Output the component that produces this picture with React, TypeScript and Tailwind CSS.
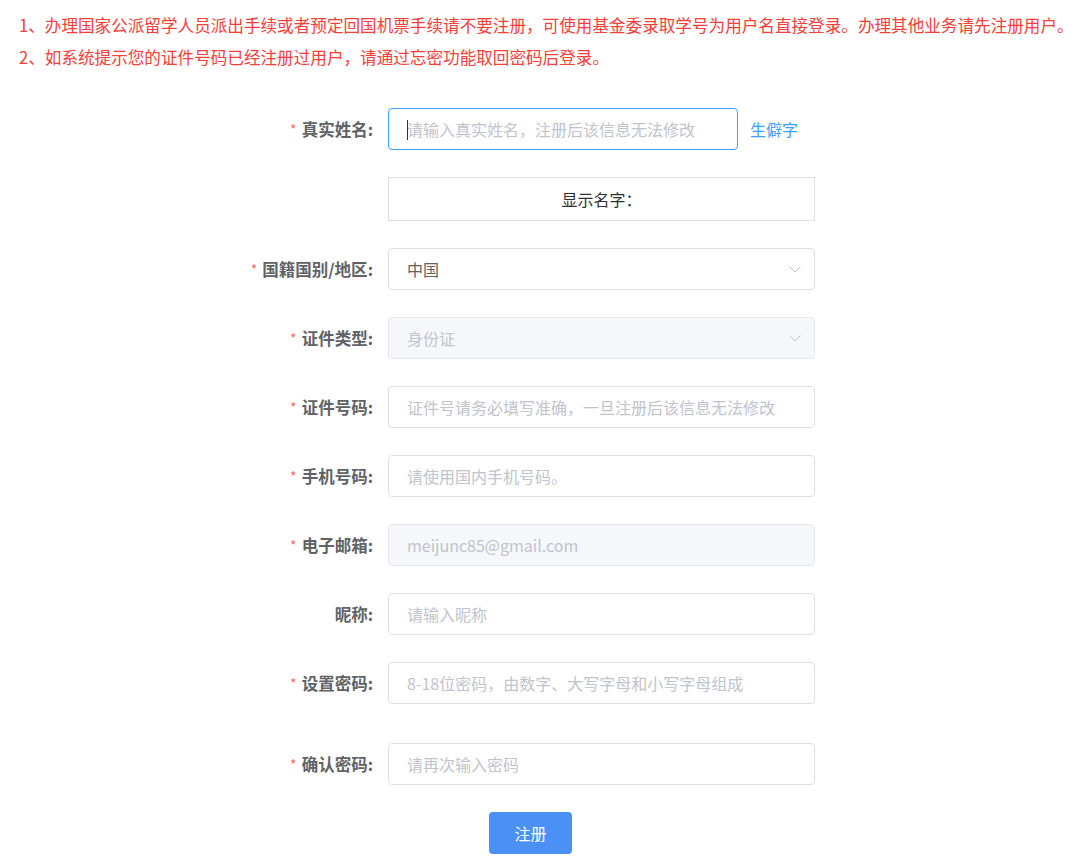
import React from 'react';

const font = "font-['Noto_Sans_CJK_SC','Noto_Sans',sans-serif]";

const Chevron: React.FC = () => (
  <svg className="w-[14px] h-[14px] text-[#c0c4cc]" viewBox="0 0 14 14" fill="none" stroke="currentColor" strokeWidth={1}>
    <path d="M1.5 4.5L7 10l5.5-5.5" />
  </svg>
);

const Label: React.FC<{ text: string; required?: boolean }> = ({ text, required }) => (
  <div className="w-[388px] shrink-0 pr-[15px] flex justify-end items-center text-[16.5px] font-bold text-[#606266]">
    {required && <span className="text-[#f56c6c] text-[14px] font-normal mr-[5px]">*</span>}
    <span>{text}:</span>
  </div>
);

const inputBase = 'h-[42px] rounded-[4px] border px-[18px] text-[16px] outline-none';

const App: React.FC = () => {
  return (
    <div className={`min-h-screen bg-white ${font}`}>
      {/* Notice */}
      <div className="pt-[9px] pl-[19px] text-[16.6px] leading-[32px] text-[#f5403a] whitespace-nowrap">
        <p>1、办理国家公派留学人员派出手续或者预定回国机票手续请不要注册，可使用基金委录取学号为用户名直接登录。办理其他业务请先注册用户。</p>
        <p>2、如系统提示您的证件号码已经注册过用户，请通过忘密功能取回密码后登录。</p>
      </div>

      {/* Form */}
      <div className="mt-[35px] flex flex-col">
        <div className="flex items-center h-[42px]">
          <Label text="真实姓名" required />
          <div className={`${inputBase} w-[350px] relative border-[#409eff] flex items-center`}>
            <span className="absolute left-[18px] top-[11px] w-px h-[20px] bg-[#303133]" />
            <span className="text-[#c0c4cc]">请输入真实姓名，注册后该信息无法修改</span>
          </div>
          <a className="ml-[12px] text-[16px] text-[#409eff]">生僻字</a>
        </div>

        <div className="flex items-center mt-[27px]">
          <div className="w-[388px] shrink-0" />
          <div className="w-[427px] h-[44px] border border-[#dcdfe6] flex items-center justify-center text-[16px] text-[#303133]">
            显示名字：
          </div>
        </div>

        <div className="flex items-center mt-[27px]">
          <Label text="国籍国别/地区" required />
          <div className={`${inputBase} w-[427px] border-[#dcdfe6] flex items-center justify-between pr-[12px] text-[#606266]`}>
            <span>中国</span>
            <Chevron />
          </div>
        </div>

        <div className="flex items-center mt-[27px]">
          <Label text="证件类型" required />
          <div className={`${inputBase} w-[427px] border-[#e4e7ed] bg-[#f5f7fa] flex items-center justify-between pr-[12px] text-[#c0c4cc]`}>
            <span>身份证</span>
            <Chevron />
          </div>
        </div>

        <div className="flex items-center mt-[27px]">
          <Label text="证件号码" required />
          <input className={`${inputBase} w-[427px] border-[#dcdfe6] placeholder:text-[#c0c4cc]`} placeholder="证件号请务必填写准确，一旦注册后该信息无法修改" />
        </div>

        <div className="flex items-center mt-[27px]">
          <Label text="手机号码" required />
          <input className={`${inputBase} w-[427px] border-[#dcdfe6] placeholder:text-[#c0c4cc]`} placeholder="请使用国内手机号码。" />
        </div>

        <div className="flex items-center mt-[27px]">
          <Label text="电子邮箱" required />
          <input disabled value="meijunc85@gmail.com" className={`${inputBase} w-[427px] border-[#e4e7ed] bg-[#f5f7fa] text-[#c0c4cc]`} />
        </div>

        <div className="flex items-center mt-[27px]">
          <Label text="昵称" />
          <input className={`${inputBase} w-[427px] border-[#dcdfe6] placeholder:text-[#c0c4cc]`} placeholder="请输入昵称" />
        </div>

        <div className="flex items-center mt-[27px]">
          <Label text="设置密码" required />
          <input type="password" className={`${inputBase} w-[427px] border-[#dcdfe6] placeholder:text-[#c0c4cc]`} placeholder="8-18位密码，由数字、大写字母和小写字母组成" />
        </div>

        <div className="flex items-center mt-[39px]">
          <Label text="确认密码" required />
          <input type="password" className={`${inputBase} w-[427px] border-[#dcdfe6] placeholder:text-[#c0c4cc]`} placeholder="请再次输入密码" />
        </div>

        <div className="flex mt-[27px] pl-[489px]">
          <button className="w-[83px] h-[42px] rounded-[4px] bg-[#4a90f5] text-white text-[16px]">注册</button>
        </div>
      </div>
    </div>
  );
};

export default App;
